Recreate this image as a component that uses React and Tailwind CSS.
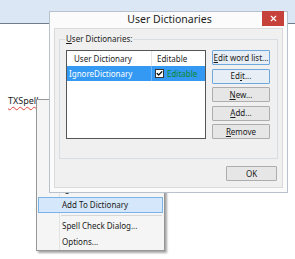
import { Check, X } from "lucide-react";

const font = { fontFamily: '"Noto Sans", "Open Sans", sans-serif' };

const WinButton = ({ children, focused = false, className = "" }) => (
  <div
    className={`h-[15px] flex items-center justify-center border text-[8px] text-[#1a1a1a] rounded-[1px] ${
      focused ? "border-[#6fa9dc] bg-[#e8eef5]" : "border-[#adadad] bg-[#e6e6e6]"
    } ${className}`}
  >
    {children}
  </div>
);

const MenuItem = ({ children, active = false }) => (
  <div
    className={`h-[16px] flex items-center pl-[23px] text-[8px] text-[#1a1a1a] mx-[1px] ${
      active ? "bg-[#d5e8fb] border border-[#7ab3e8]" : "border border-transparent"
    }`}
  >
    {children}
  </div>
);

export default function App() {
  return (
    <div className="relative w-[295px] h-[259px] bg-white overflow-hidden" style={font}>
      {/* window chrome strip */}
      <div className="h-[24px] bg-[#dce7f5] border-b border-[#6f7d8c]" />

      {/* misspelled word */}
      <div className="absolute left-[8px] top-[94px] text-[9px] text-[#222] underline decoration-wavy decoration-[#e0403a] decoration-1 underline-offset-2">
        TXSpell
      </div>

      {/* context menu */}
      <div className="absolute left-[36px] top-[99px] w-[129px] h-[152px] bg-[#f5f5f5] border border-[#979797] shadow-[2px_2px_2px_rgba(0,0,0,0.35)] flex">
        <div className="absolute left-[22px] top-0 bottom-0 w-px bg-[#e2e3e3]" />
        <div className="flex flex-col pt-[2px] w-full relative">
          <MenuItem>Suggestion</MenuItem>
          <MenuItem>Suggestion</MenuItem>
          <MenuItem>Suggestion</MenuItem>
          <MenuItem>Ignore</MenuItem>
          <MenuItem>Ignore Once</MenuItem>
          <MenuItem>Ignore All</MenuItem>
          <MenuItem active>Add To Dictionary</MenuItem>
          <div className="h-px bg-[#d7d7d7] my-[2px] ml-[24px] mr-[2px]" />
          <MenuItem>Spell Check Dialog...</MenuItem>
          <MenuItem>Options...</MenuItem>
        </div>
      </div>

      {/* dialog */}
      <div className="absolute left-[49px] top-[11px] w-[239px] h-[182px] bg-[#fbfbfb] border border-[#b8c2cc] flex flex-col">
        <div className="h-[18px] flex items-center relative">
          <div className="flex-1 text-center text-[10.5px] text-[#1e1e1e] pl-[2px]">User Dictionaries</div>
          <div className="absolute right-[3px] top-[-1px] w-[22px] h-[15px] bg-[#c7413b] flex items-center justify-center">
            <X size={9} color="white" strokeWidth={3} />
          </div>
        </div>

        <div className="flex-1 mx-[4px] mb-[4px] bg-[#f0f0f0] border border-[#dadada] flex flex-col px-[4px] pt-[10px] pb-[6px]">
          {/* group box */}
          <div className="relative border border-[#d8dde2] h-[120px] w-[219px] px-[6px] pt-[10px]">
            <div className="absolute left-[5px] top-[-7px] bg-[#f0f0f0] px-[1px] text-[8px] text-[#1e1e1e]">
              <span className="underline">U</span>ser Dictionaries:
            </div>
            <div className="flex gap-[6px]">
              <div className="w-[140px] h-[89px] bg-white border border-[#555]">
                <div className="flex h-[15px] text-[8px] text-[#1e1e1e] items-center">
                  <div className="w-[85px] pl-[7px] h-full flex items-center border-r border-[#e5e5e5]">User Dictionary</div>
                  <div className="pl-[5px]">Editable</div>
                </div>
                <div className="flex h-[15px] bg-[#3399f3] text-[8px] items-center">
                  <div className="w-[85px] pl-[2px] h-full flex items-center text-white border-r border-[#6fb4f4]">IgnoreDictionary</div>
                  <div className="pl-[3px] flex items-center gap-[3px] text-[#0b8a2c]">
                    <span className="w-[9px] h-[9px] bg-white border border-[#333] flex items-center justify-center">
                      <Check size={9} strokeWidth={4.5} color="#111" />
                    </span>
                    Editable
                  </div>
                </div>
              </div>
              <div className="w-[58px] flex flex-col gap-[3.5px]">
                <WinButton focused>
                  <span className="underline">E</span>dit word list...
                </WinButton>
                <WinButton focused>
                  Ed<span className="underline">i</span>t...
                </WinButton>
                <WinButton>
                  <span className="underline">N</span>ew...
                </WinButton>
                <WinButton>
                  <span className="underline">A</span>dd...
                </WinButton>
                <WinButton>
                  <span className="underline">R</span>emove
                </WinButton>
              </div>
            </div>
          </div>
          <div className="flex justify-end mt-[7px] pr-[1px]">
            <WinButton className="w-[51px]">OK</WinButton>
          </div>
        </div>
      </div>
    </div>
  );
}
